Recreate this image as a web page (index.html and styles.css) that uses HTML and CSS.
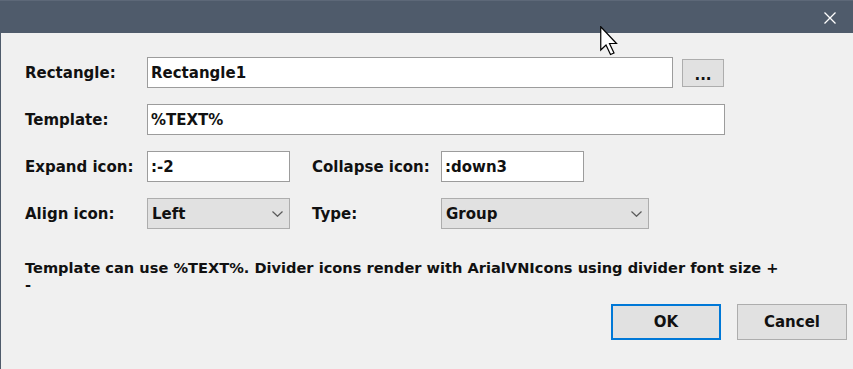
FILE: index.html
```html
<!DOCTYPE html>
<html>
<head>
<meta charset="utf-8">
<link rel="stylesheet" href="styles.css">
</head>
<body>
<div class="window">
  <div class="titlebar">
    <span class="close">
      <svg width="12" height="12" viewBox="0 0 12 12"><path d="M0.5 0.5 L11.5 11.5 M11.5 0.5 L0.5 11.5" stroke="#ffffff" stroke-width="1.3" fill="none"/></svg>
    </span>
  </div>
  <div class="content">
    <div class="row">
      <span class="lbl">Rectangle:</span>
      <div class="field f-rect">Rectangle1</div>
      <div class="btn-small">...</div>
    </div>
    <div class="row">
      <span class="lbl">Template:</span>
      <div class="field f-tpl">%TEXT%</div>
    </div>
    <div class="row">
      <span class="lbl">Expand icon:</span>
      <div class="field f-short">:-2</div>
      <span class="lbl lbl2">Collapse icon:</span>
      <div class="field f-short">:down3</div>
    </div>
    <div class="row">
      <span class="lbl">Align icon:</span>
      <div class="select f-short"><span>Left</span><svg class="chev" width="11" height="6" viewBox="0 0 11 6"><path d="M0.5 0.5 L5.5 5.3 L10.5 0.5" stroke="#5a5a5a" stroke-width="1.2" fill="none"/></svg></div>
      <span class="lbl lbl2">Type:</span>
      <div class="select f-type"><span>Group</span><svg class="chev" width="11" height="6" viewBox="0 0 11 6"><path d="M0.5 0.5 L5.5 5.3 L10.5 0.5" stroke="#5a5a5a" stroke-width="1.2" fill="none"/></svg></div>
    </div>
    <p class="note">Template can use %TEXT%. Divider icons render with ArialVNIcons using divider font size +<br>-</p>
    <div class="actions">
      <div class="btn primary">OK</div>
      <div class="btn">Cancel</div>
    </div>
  </div>
  <svg class="cursor" width="18" height="30" viewBox="0 0 18 30"><path d="M0.75 0.75 L0.75 24 L6 19 L10.5 28.5 L14 27 L9.5 17.5 L16.5 17.5 Z" fill="#ffffff" stroke="#000000" stroke-width="1.2" stroke-linejoin="miter"/></svg>
</div>
</body>
</html>
```

FILE: styles.css
```css
* { box-sizing: border-box; }
html, body { margin: 0; padding: 0; }
body {
  width: 853px;
  height: 369px;
  overflow: hidden;
  background: #f0f0f0;
  font-family: "DejaVu Sans", "Liberation Sans", sans-serif;
  font-weight: bold;
  font-size: 15px;
  color: #111111;
}
.window {
  position: relative;
  width: 853px;
  height: 369px;
  display: flex;
  flex-direction: column;
  border-left: 1px solid #4f5b6b;
}
.titlebar {
  height: 33px;
  flex: none;
  background: #4f5b6b;
  border-top: 1px solid #5d6878;
  display: flex;
  justify-content: flex-end;
  align-items: center;
  padding-right: 17px;
  margin-left: -1px;
}
.close { display: flex; width: 12px; height: 12px; margin-top: 1px; }
.content {
  display: flex;
  flex-direction: column;
  padding: 24px 0 0 24px;
  gap: 16px;
}
.row {
  display: flex;
  align-items: center;
  height: 31px;
}
.lbl {
  width: 122px;
  flex: none;
  white-space: nowrap;
}
.lbl2 { margin-left: 22px; width: 129px; }
.field {
  height: 31px;
  border: 1px solid #9c9c9c;
  background: #ffffff;
  padding-left: 3px;
  display: flex;
  align-items: center;
  white-space: nowrap;
}
.f-rect { width: 526px; }
.f-tpl { width: 578px; }
.f-short { width: 143px; }
.f-type { width: 208px; }
.btn-small {
  margin-left: 9px;
  width: 42px;
  height: 28px;
  background: #e1e1e1;
  border: 1px solid #adadad;
  display: flex;
  align-items: center;
  justify-content: center;
  padding-top: 4px;
  font-size: 15px;
}
.select {
  height: 31px;
  background: #e1e1e1;
  border: 1px solid #adadad;
  display: flex;
  align-items: center;
  justify-content: space-between;
  padding: 0 6px 0 4px;
}
.chev { display: block; }
.note {
  margin: 14px 0 0 0;
  font-size: 14.6px;
  line-height: 17px;
  height: 29px;
  width: 800px;
  white-space: nowrap;
}
.actions {
  display: flex;
  justify-content: flex-end;
  gap: 16px;
  padding-right: 6px;
}
.btn {
  width: 110px;
  height: 36px;
  background: #e1e1e1;
  border: 1px solid #adadad;
  display: flex;
  align-items: center;
  justify-content: center;
}
.btn.primary { border: 2px solid #0078d7; }
.cursor {
  position: absolute;
  left: 599px;
  top: 26px;
}
```
